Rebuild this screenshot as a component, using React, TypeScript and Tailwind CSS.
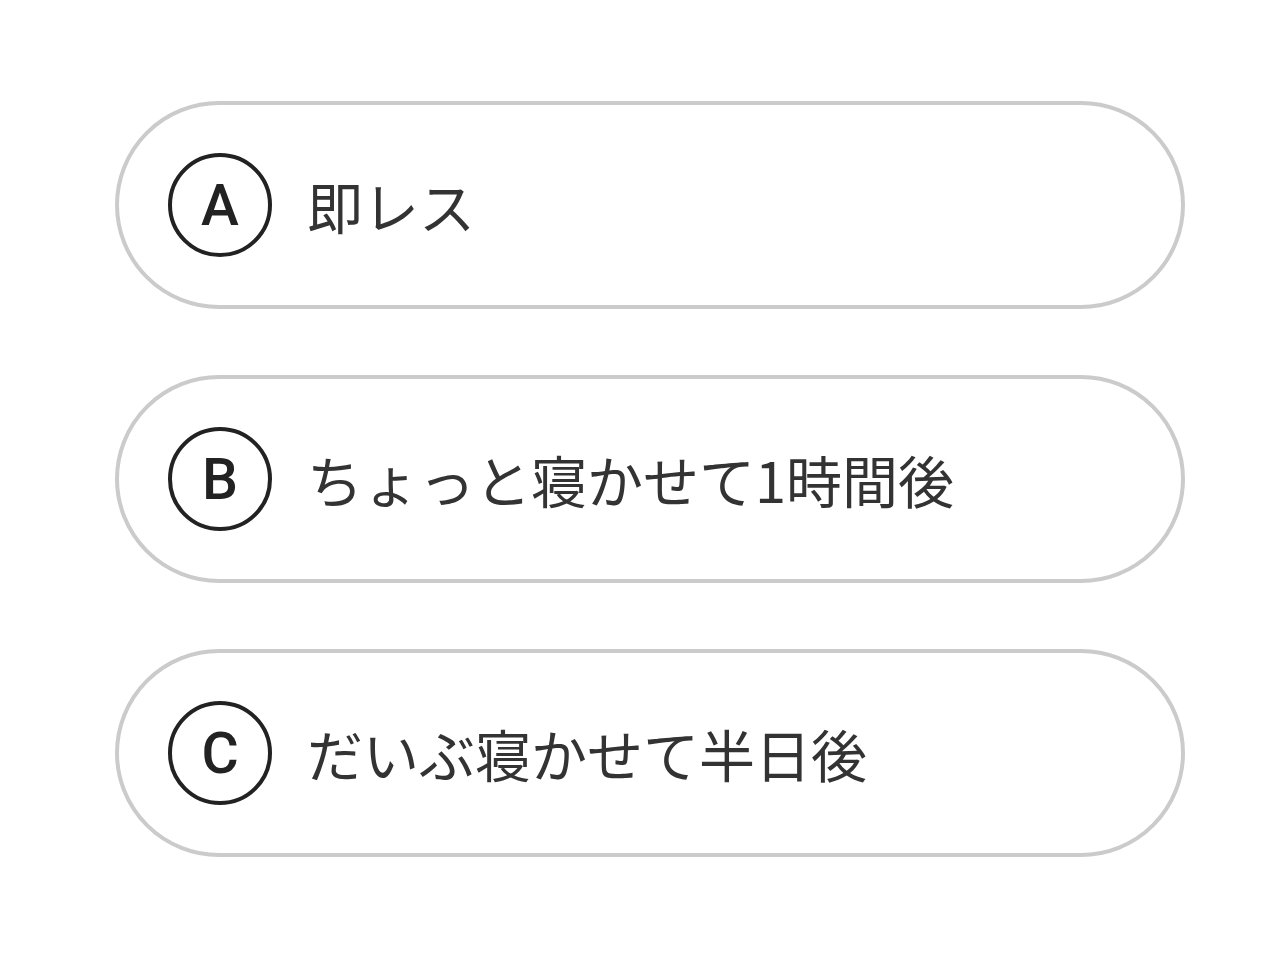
const options = [
  { key: "A", label: "即レス" },
  { key: "B", label: "ちょっと寝かせて1時間後" },
  { key: "C", label: "だいぶ寝かせて半日後" },
]

export default function App() {
  return (
    <div className="min-h-[958px] w-[1280px] bg-white pt-[101px]" style={{ fontFamily: '"Noto Sans CJK JP", sans-serif' }}>
      <div className="ml-[115px] flex w-[1070px] flex-col gap-[66px]">
        {options.map((opt) => (
          <button
            key={opt.key}
            className="flex h-[208px] items-center gap-[35px] rounded-full border-4 border-[#cbcbcb] bg-white pl-[49px] text-left"
          >
            <span
              className="flex h-[104px] w-[104px] shrink-0 items-center justify-center rounded-full border-4 border-[#222222] text-[57px] font-medium leading-none text-[#222222]"
              style={{ fontFamily: "Roboto, sans-serif" }}
            >
              {opt.key}
            </span>
            <span className="text-[56px] leading-none text-[#333333]">{opt.label}</span>
          </button>
        ))}
      </div>
    </div>
  )
}
